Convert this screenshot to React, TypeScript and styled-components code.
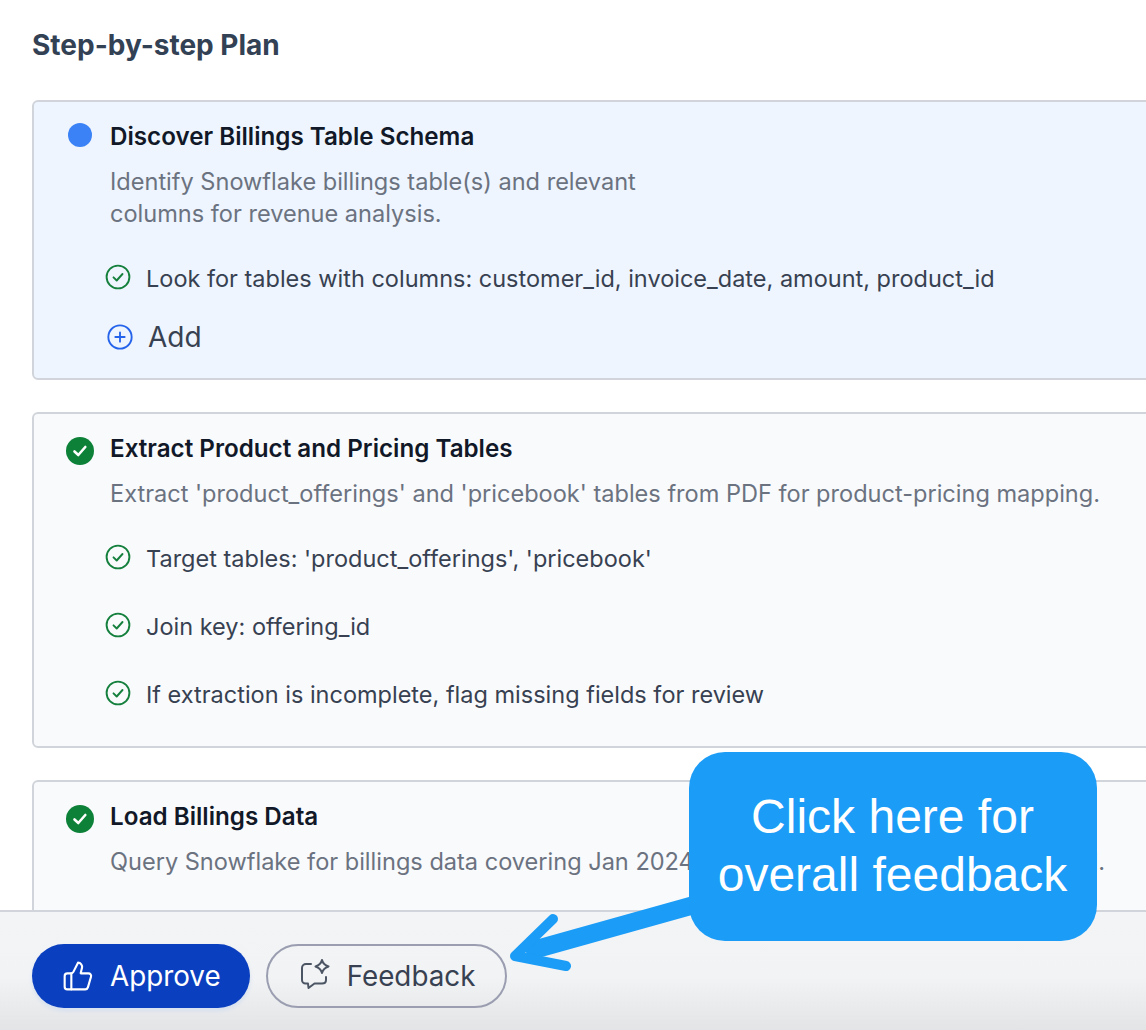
import React from "react";
import styled, { createGlobalStyle } from "styled-components";
import { CirclePlus, ThumbsUp } from "lucide-react";

const GlobalStyle = createGlobalStyle`
  html, body {
    margin: 0;
    padding: 0;
    background: #fff;
  }
  * {
    box-sizing: border-box;
  }
`;

const Page = styled.div`
  position: relative;
  width: 1146px;
  height: 1030px;
  display: flex;
  flex-direction: column;
  overflow: hidden;
  background: #fff;
  font-family: Inter, "Liberation Sans", sans-serif;
`;

const Content = styled.main`
  flex: 1;
  min-height: 0;
  overflow: hidden;
  padding: 28px 0 0 32px;
`;

const Heading = styled.h2`
  margin: 0 0 38px;
  font-size: 28px;
  line-height: 34px;
  font-weight: 700;
  color: #334155;
`;

const Card = styled.section<{ $active?: boolean; $clipped?: boolean }>`
  width: 1180px;
  min-height: ${(p) => (p.$clipped ? "200px" : "0")};
  margin-bottom: 32px;
  padding: 20px 32px ${(p) => (p.$active ? "16px" : "18px")} 34px;
  border: 2px solid #d1d5db;
  border-radius: 6px;
  background: ${(p) => (p.$active ? "#eef5fe" : "#f9fafc")};
`;

const CardHead = styled.div`
  display: flex;
  align-items: center;
  gap: 18px;
  height: 30px;
`;

const Dot = styled.span`
  flex: none;
  width: 24px;
  height: 24px;
  margin-top: -4px;
  border-radius: 50%;
  background: #3b82f6;
`;

const DoneBadge = styled.span`
  flex: none;
  width: 28px;
  height: 28px;
  margin: 4px -2px 0;
  border-radius: 50%;
  background: #0d8138;
  display: flex;
  align-items: center;
  justify-content: center;
`;

const Title = styled.h3`
  margin: 0;
  font-size: 24.2px;
  line-height: 30px;
  font-weight: 600;
  color: #111827;
`;

const Description = styled.p<{ $narrow?: boolean }>`
  margin: 14px 0 0 42px;
  max-width: ${(p) => (p.$narrow ? "560px" : "none")};
  font-size: 23.55px;
  line-height: 32px;
  color: #6b7280;
  white-space: ${(p) => (p.$narrow ? "normal" : "nowrap")};
`;

const Steps = styled.ul`
  list-style: none;
  margin: 14px 0 0;
  padding: 0;
`;

const Step = styled.li`
  display: flex;
  align-items: center;
  gap: 14px;
  height: 68px;
  padding-left: 36px;
  font-size: 23.5px;
  color: #374151;
  white-space: nowrap;

  svg {
    flex: none;
    margin-top: -2px;
    color: #15803d;
  }
`;

const AddRow = styled.div`
  display: flex;
  align-items: center;
  gap: 14px;
  height: 50px;
  padding-left: 38px;
  font-size: 28px;
  color: #374151;

  svg {
    color: #2563eb;
  }
`;

const Footer = styled.footer`
  flex: none;
  height: 120px;
  display: flex;
  align-items: center;
  gap: 16px;
  padding: 10px 32px 0;
  border-top: 2px solid #d1d5db;
  background: linear-gradient(180deg, #f3f4f6 0%, #f2f3f5 55%, #e3e4e6 100%);
`;

const Button = styled.button<{ $primary?: boolean }>`
  height: 64px;
  display: flex;
  align-items: center;
  gap: ${(p) => (p.$primary ? "16px" : "13px")};
  padding: ${(p) => (p.$primary ? "0 29px 0 30px" : "0 30px 0 32px")};
  border-radius: 32px;
  border: ${(p) => (p.$primary ? "none" : "2px solid #9a9eb0")};
  background: ${(p) => (p.$primary ? "#0a3fbf" : "transparent")};
  color: ${(p) => (p.$primary ? "#fff" : "#374151")};
  font-family: inherit;
  font-size: 27.8px;
  box-shadow: ${(p) => (p.$primary ? "0 3px 4px #d5e0f0" : "none")};
`;

const Callout = styled.div`
  position: absolute;
  left: 689px;
  top: 752px;
  width: 408px;
  height: 189px;
  padding: 0 1px 2px 0;
  display: flex;
  align-items: center;
  justify-content: center;
  border-radius: 36px;
  background: #1b9cf6;
  color: #fff;
  font-family: "Liberation Sans", Arial, sans-serif;
  font-size: 48px;
  line-height: 58px;
  text-align: center;
`;

const Arrow = styled.svg`
  position: absolute;
  left: 500px;
  top: 885px;
`;

const ChatSpark = () => (
  <svg width="34" height="34" viewBox="0 0 34 34" fill="none" stroke="#4b5563" strokeWidth="2" strokeLinejoin="round" strokeLinecap="round">
    <path d="M11 5H6C3.8 5 2 6.8 2 9V21c0 2 1.6 3.500 3.500 3.500H8l.5 4.500 6-4.500H22c2.300 0 4-1.500 4-3.500v-3" />
    <path d="M22 1Q23 5.500 28.500 7.500 23 9.500 22 14 21 9.500 15.500 7.500 21 5.500 22 1Z" />
  </svg>
);

const StepCheck = () => (
  <svg width="28" height="28" viewBox="0 0 28 28" fill="none" stroke="currentColor" strokeWidth="1.9" strokeLinecap="round" strokeLinejoin="round">
    <circle cx="14" cy="14" r="11.400" />
    <path d="M9.500 14.300l3.200 3.200 5.800-6.500" />
  </svg>
);

const CheckItem = ({ children }: { children: React.ReactNode }) => (
  <Step>
    <StepCheck />
    {children}
  </Step>
);

const Done = () => (
  <DoneBadge>
    <svg width="18" height="18" viewBox="0 0 18 18" fill="none" stroke="#fff" strokeWidth="2.6" strokeLinecap="round" strokeLinejoin="round">
      <path d="M3.500 9.500l3.800 3.500 7-8" />
    </svg>
  </DoneBadge>
);

const App = () => {
  return (
    <Page>
      <GlobalStyle />
      <Content>
        <Heading>Step-by-step Plan</Heading>
        <Card $active>
          <CardHead>
            <Dot />
            <Title>Discover Billings Table Schema</Title>
          </CardHead>
          <Description $narrow>
            Identify Snowflake billings table(s) and relevant columns for revenue analysis.
          </Description>
          <Steps>
            <CheckItem>Look for tables with columns: customer_id, invoice_date, amount, product_id</CheckItem>
          </Steps>
          <AddRow>
            <CirclePlus size={28} strokeWidth={1.6} />
            Add
          </AddRow>
        </Card>
        <Card>
          <CardHead>
            <Done />
            <Title>Extract Product and Pricing Tables</Title>
          </CardHead>
          <Description>
            Extract 'product_offerings' and 'pricebook' tables from PDF for product-pricing mapping.
          </Description>
          <Steps>
            <CheckItem>Target tables: 'product_offerings', 'pricebook'</CheckItem>
            <CheckItem>Join key: offering_id</CheckItem>
            <CheckItem>If extraction is incomplete, flag missing fields for review</CheckItem>
          </Steps>
        </Card>
        <Card $clipped>
          <CardHead>
            <Done />
            <Title>Load Billings Data</Title>
          </CardHead>
          <Description>
            Query Snowflake for billings data covering Jan 2024 through the latest completed period.
          </Description>
        </Card>
      </Content>
      <Footer>
        <Button $primary>
          <ThumbsUp size={32} strokeWidth={1.6} />
          Approve
        </Button>
        <Button>
          <ChatSpark />
          Feedback
        </Button>
      </Footer>
      <Arrow width="200" height="100" viewBox="0 0 200 100" fill="none" stroke="#1b9cf6" strokeLinecap="round" strokeLinejoin="round">
        <path d="M194 20 L26 67" strokeWidth="18" strokeLinecap="butt" />
        <path d="M53 34 L15 71 L66 81" strokeWidth="10" />
      </Arrow>
      <Callout>
        Click here for
        <br />
        overall feedback
      </Callout>
    </Page>
  );
};

export default App;
